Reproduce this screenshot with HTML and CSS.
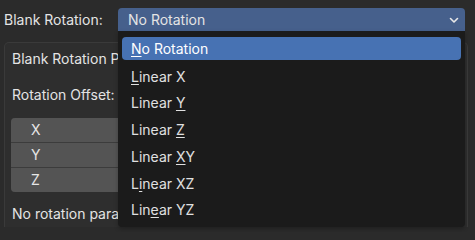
FILE: index.html
```html
<!DOCTYPE html>
<html lang="en">
<head>
<meta charset="utf-8">
<title>Blank Rotation</title>
<link rel="stylesheet" href="styles.css">
</head>
<body>
<div class="page">
  <div class="top-row">
    <span class="top-label">Blank Rotation:</span>
    <div class="dropdown">
      <span class="dropdown-text">No Rotation</span>
      <svg class="chevron" width="10" height="7" viewBox="0 0 10 7"><polyline points="1.5,1.5 5,5 8.5,1.5" fill="none" stroke="#e8e8e8" stroke-width="1.6" stroke-linecap="round" stroke-linejoin="round"/></svg>
    </div>
  </div>
  <div class="panel">
    <div class="line">Blank Rotation Parameters</div>
    <div class="line gap">Rotation Offset:</div>
    <div class="vector">
      <div class="vrow"><span class="axis">X</span></div>
      <div class="vrow"><span class="axis">Y</span></div>
      <div class="vrow"><span class="axis">Z</span></div>
    </div>
    <div class="line note">No rotation parameters</div>
  </div>
  <div class="menu">
    <div class="item active"><u>N</u>o Rotation</div>
    <div class="item"><u>L</u>inear X</div>
    <div class="item">Linear <u>Y</u></div>
    <div class="item">Linear <u>Z</u></div>
    <div class="item">Linear <u>X</u>Y</div>
    <div class="item">L<u>i</u>near XZ</div>
    <div class="item">Lin<u>e</u>ar YZ</div>
  </div>
</div>
</body>
</html>
```
FILE: styles.css
```css
html, body {
  margin: 0;
  padding: 0;
  background: #2b2b2b;
}
body {
  font-family: Inter, "DejaVu Sans", sans-serif;
  font-size: 14px;
  color: #e4e4e4;
  width: 475px;
  height: 232px;
  overflow: hidden;
}
.page {
  position: relative;
  width: 475px;
  height: 232px;
}
.top-row {
  display: flex;
  align-items: center;
  padding: 8px 0 0 4px;
  height: 23px;
}
.top-label {
  width: 114px;
  line-height: 23px;
  padding-bottom: 1px;
}
.dropdown {
  width: 347px;
  height: 23px;
  background: #46608c;
  border-radius: 4px 4px 0 0;
  display: flex;
  align-items: center;
  justify-content: space-between;
  padding: 0 6px 0 10px;
  box-sizing: border-box;
}
.dropdown-text {
  line-height: 23px;
  padding-bottom: 1px;
}
.chevron {
  display: block;
  margin-top: 1px;
}
.panel {
  margin: 11px 7px 0 4px;
  height: 185px;
  background: #2e2e2e;
  border: 1px solid #3a3a3a;
  border-bottom: none;
  border-radius: 5px 5px 0 0;
  padding: 4px 6px 0 6px;
  box-sizing: border-box;
}
.line {
  line-height: 24px;
  padding-left: 1px;
  width: 106px;
  overflow: hidden;
  white-space: nowrap;
}
.gap {
  margin-top: 12px;
}
.vector {
  margin-top: 11px;
  border-radius: 4px;
  overflow: hidden;
  display: flex;
  flex-direction: column;
  gap: 1px;
  background: #3c3c3c;
}
.vrow {
  height: 24px;
  background: #545454;
  display: flex;
  align-items: center;
  padding-left: 20px;
}
.axis {
  line-height: 24px;
  color: #e6e6e6;
}
.note {
  margin-top: 10px;
}
.menu {
  position: absolute;
  left: 118px;
  top: 31px;
  width: 347px;
  height: 196px;
  background: #1b1b1b;
  border-radius: 0 0 4px 4px;
  padding: 6px 4px 0 4px;
  box-sizing: border-box;
  box-shadow: 0 2px 4px rgba(0,0,0,0.25);
}
.item {
  height: 23px;
  line-height: 23px;
  margin-bottom: 3.8px;
  padding-left: 9px;
  border-radius: 4px;
  color: #e0e0e0;
}
.item.active {
  background: #4772b3;
  color: #ffffff;
  margin-bottom: 4.5px;
}
.item u {
  text-decoration-thickness: 1px;
  text-underline-offset: 2px;
}
```
